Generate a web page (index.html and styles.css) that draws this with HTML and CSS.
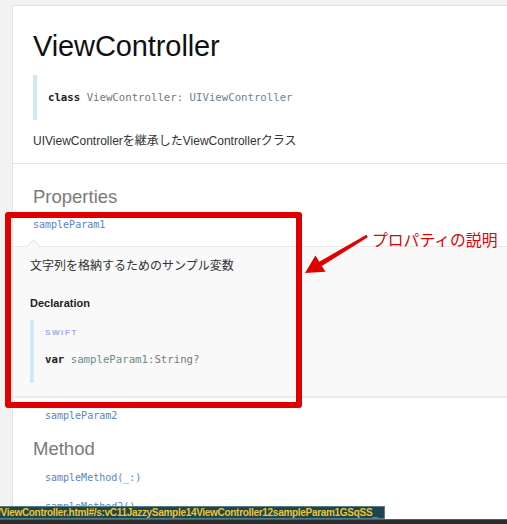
FILE: index.html
```html
<!DOCTYPE html>
<html lang="ja">
<head>
<meta charset="utf-8">
<title>ViewController</title>
<link rel="stylesheet" href="styles.css">
</head>
<body>
<div class="page">
  <section class="head">
    <h1 class="title">ViewController</h1>
    <div class="decl"><code><span class="kw">class</span> <span class="nm">ViewController</span><span class="nm">:</span> <span class="ty">UIViewController</span></code></div>
    <p class="desc">UIViewControllerを継承したViewControllerクラス</p>
  </section>
  <section class="sec">
    <h3 class="sec-title">Properties</h3>
    <div class="item open">
      <a class="item-link">sampleParam1</a>
      <div class="detail">
        <span class="caret"></span>
        <p class="abstract">文字列を格納するためのサンプル変数</p>
        <h4 class="decl-title">Declaration</h4>
        <div class="code">
          <p class="lang">SWIFT</p>
          <code class="line"><span class="kw">var</span> <span class="id">sampleParam1</span><span class="nm">:String?</span></code>
        </div>
      </div>
    </div>
    <div class="item"><a class="item-link">sampleParam2</a></div>
    <h3 class="sec-title method">Method</h3>
    <div class="item first"><a class="item-link">sampleMethod(_:)</a></div>
    <div class="item next"><a class="item-link">sampleMethod2()</a></div>
  </section>
</div>

<div class="highlight"></div>
<svg class="arrow" viewBox="300 230 72 46" width="72" height="46">
  <polygon fill="#e00000" points="305,273 325.5,271.8 321.8,266 367.8,237.2 366.4,234.8 319.2,261.7 315.5,255.6"/>
</svg>
<div class="note">プロパティの説明</div>

<div class="status">/ViewController.html#/s:vC11JazzySample14ViewController12sampleParam1GSqSS_</div>
<div class="dock"></div>
</body>
</html>
```

FILE: styles.css
```css
html, body {
  margin: 0;
  padding: 0;
}
body {
  background: #f2f2f2;
  width: 507px;
  height: 524px;
  overflow: hidden;
  position: relative;
  font-family: "Liberation Sans", "Noto Sans CJK JP", sans-serif;
  color: #333;
}
.page {
  margin: 5px 0 0 12px;
  background: #fff;
  border-left: 1px solid #e3e3e3;
  border-top: 1px solid #e3e3e3;
  height: 518px;
  overflow: hidden;
}
code {
  font-family: "DejaVu Sans Mono", monospace;
}
.head {
  padding: 0 0 14px 20px;
  border-bottom: 1px solid #e6e6e6;
}
.title {
  margin: 26px 0 0;
  font-size: 29px;
  line-height: 29px;
  font-weight: 400;
  color: #111;
  letter-spacing: -0.1px;
}
.decl {
  margin-top: 14px;
  border-left: 4px solid #d1e8f5;
  padding: 14px 0 14px 11px;
  line-height: 17px;
  font-size: 10.7px;
}
.kw {
  font-weight: 700;
  color: #222;
}
.nm {
  color: #777;
}
.ty {
  color: #6f7f94;
}
.id {
  color: #6a8c8c;
}
.desc {
  margin: 13px 0 0;
  font-size: 12px;
  line-height: 16px;
  color: #333;
}
.sec {
  padding-left: 20px;
}
.sec-title {
  margin: 22px 0 0;
  font-size: 18.5px;
  line-height: 22px;
  font-weight: 400;
  color: #7a7a7a;
}
.sec-title.method {
  margin-top: 15px;
}
.item {
  margin-top: 11px;
}
.item.open {
  margin-top: 10px;
}
.item.first {
  margin-top: 11px;
}
.item.next {
  margin-top: 15px;
}
.item-link {
  display: block;
  font-family: "DejaVu Sans Mono", monospace;
  font-size: 10px;
  line-height: 14px;
  color: #5585c8;
  padding-left: 12px;
}
.item.open .item-link {
  padding-left: 0;
}
.detail {
  position: relative;
  margin: 14px 0 0 -20px;
  background: #f9f9f9;
  border-top: 1px solid #e9e9e9;
  border-bottom: 2px solid #ececec;
  padding: 11px 0 13px 17px;
}
.caret {
  position: absolute;
  top: -6px;
  left: 16px;
  width: 8px;
  height: 8px;
  background: #f9f9f9;
  border-top: 1px solid #e6e6e6;
  border-left: 1px solid #e6e6e6;
  transform: rotate(45deg);
}
.abstract {
  margin: 0;
  font-size: 12px;
  line-height: 16px;
  color: #333;
}
.decl-title {
  margin: 22px 0 0;
  font-size: 11px;
  line-height: 14px;
  font-weight: 700;
  color: #222;
}
.code {
  margin-top: 10px;
  border-left: 4px solid #d1e8f5;
  padding: 8px 0 16px 11px;
}
.lang {
  margin: 0;
  font-size: 8px;
  line-height: 10px;
  font-weight: 700;
  letter-spacing: 1.6px;
  color: #a3a6f0;
}
.line {
  display: block;
  margin-top: 15px;
  font-size: 10.7px;
  line-height: 14px;
}
.highlight {
  position: absolute;
  left: 5px;
  top: 212px;
  width: 297px;
  height: 196px;
  box-sizing: border-box;
  border: 6px solid #e00000;
  border-radius: 3px;
}
.arrow {
  position: absolute;
  left: 300px;
  top: 230px;
}
.note {
  position: absolute;
  left: 372px;
  top: 231px;
  font-family: "Noto Sans CJK JP", sans-serif;
  font-size: 15.8px;
  line-height: 18px;
  color: #e00000;
  white-space: nowrap;
}
.status {
  position: absolute;
  left: 0;
  top: 506px;
  width: 385px;
  height: 13px;
  box-sizing: border-box;
  background: #1c4750;
  border: 1px solid #557d84;
  border-left: none;
  color: #f0c22e;
  font-family: "Liberation Sans", sans-serif;
  font-size: 10px;
  font-weight: 700;
  letter-spacing: -0.3px;
  line-height: 11px;
  white-space: nowrap;
  overflow: hidden;
  text-indent: -2px;
}
.dock {
  position: absolute;
  left: 0;
  top: 519px;
  width: 507px;
  height: 5px;
  background: #2c2c2c;
  border-top: 1px solid #5a5a5a;
  box-sizing: border-box;
}
```
